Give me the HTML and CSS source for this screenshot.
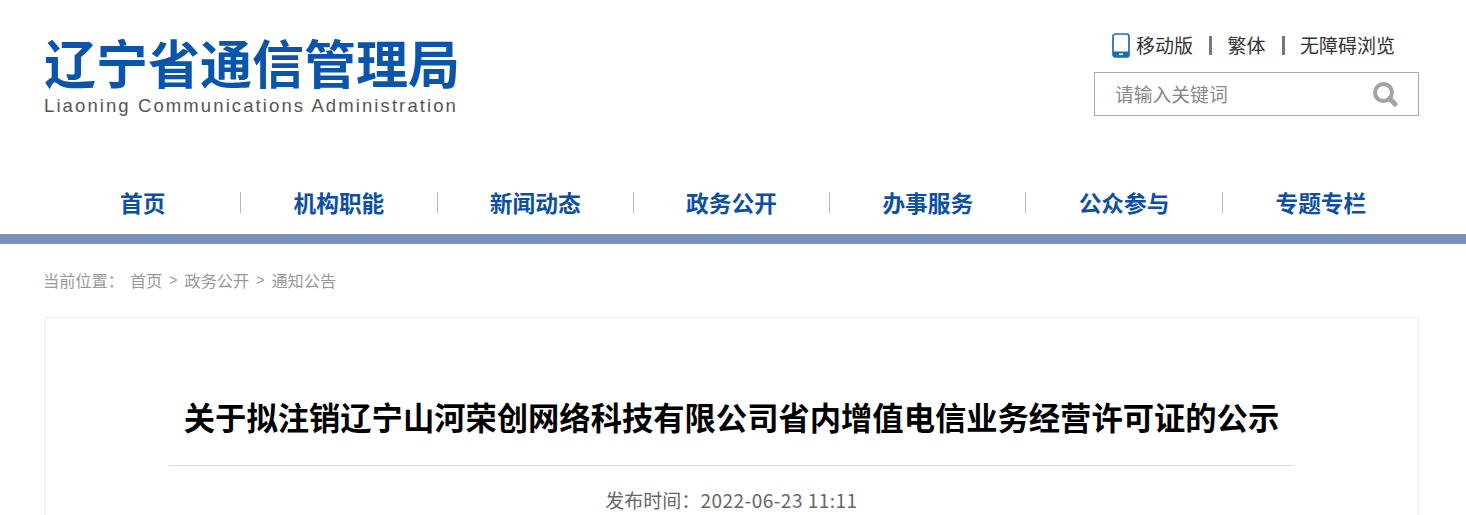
FILE: index.html
```html
<!DOCTYPE html>
<html lang="zh-CN">
<head>
<meta charset="utf-8">
<title>辽宁省通信管理局</title>
<link rel="stylesheet" href="styles.css">
</head>
<body>
<div class="page">
  <header class="header">
    <div class="logo">
      <div class="logo-cn">辽宁省通信管理局</div>
      <div class="logo-en">Liaoning Communications Administration</div>
    </div>
    <div class="tools">
      <div class="links">
        <a class="link link-mobile">
          <svg class="phone" width="18" height="25" viewBox="0 0 18 25"><rect x="1" y="1" width="16" height="23" rx="2.5" fill="#fff" stroke="#1a6bb8" stroke-width="1.7"/><rect x="1" y="18.5" width="16" height="5.5" fill="#1a6bb8"/><rect x="7" y="20.5" width="4" height="1.5" fill="#fff"/></svg>
          移动版</a>
        <span class="sep"></span>
        <a class="link">繁体</a>
        <span class="sep"></span>
        <a class="link">无障碍浏览</a>
      </div>
      <div class="search">
        <span class="placeholder">请输入关键词</span>
        <svg class="search-icon" width="26" height="26" viewBox="0 0 26 26"><circle cx="11.5" cy="11.5" r="8.5" fill="none" stroke="#a3a3a3" stroke-width="4"/><path d="M17.5 17.5L23 23" stroke="#a3a3a3" stroke-width="5" stroke-linecap="round"/></svg>
      </div>
    </div>
  </header>
  <nav class="nav">
    <a class="nav-item">首页</a>
    <a class="nav-item">机构职能</a>
    <a class="nav-item">新闻动态</a>
    <a class="nav-item">政务公开</a>
    <a class="nav-item">办事服务</a>
    <a class="nav-item">公众参与</a>
    <a class="nav-item">专题专栏</a>
  </nav>
  <div class="band"></div>
  <div class="crumbs">
    <span class="crumb-label">当前位置：</span>
    <a>首页</a><span class="gt">&gt;</span><a>政务公开</a><span class="gt">&gt;</span><a>通知公告</a>
  </div>
  <main class="card">
    <h1 class="title">关于拟注销辽宁山河荣创网络科技有限公司省内增值电信业务经营许可证的公示</h1>
    <div class="meta">发布时间：<span class="meta-date">2022-06-23 11:11</span></div>
  </main>
</div>
</body>
</html>
```
FILE: styles.css
```css
* { box-sizing: border-box; }
html, body { margin: 0; padding: 0; background: #fff; }
body { font-family: "Microsoft YaHei", "Noto Sans CJK SC", "Liberation Sans", sans-serif; }
.page { height: 515px; overflow: hidden; }
.header { display: flex; justify-content: space-between; align-items: flex-start; padding: 0 47px 0 44px; height: 184px; }
.logo { padding-top: 34px; width: 420px; }
.logo-cn { font-size: 52px; line-height: 56px; font-weight: 700; color: #0a55a9; white-space: nowrap; }
.logo-en { font-family: "Liberation Sans", sans-serif; font-size: 18.5px; line-height: 20px; letter-spacing: 2.1px; color: #555; white-space: nowrap; margin-top: 6px; }
.tools { width: 325px; padding-top: 31px; }
.links { display: flex; align-items: center; height: 28px; padding-left: 18px; font-size: 19px; color: #333; }
.link { display: flex; align-items: center; line-height: 28px; white-space: nowrap; }
.phone { margin-right: 6px; }
.sep { width: 3px; height: 19px; background: #777; margin: 0 15.5px 0 16px; }
.search { display: flex; justify-content: space-between; align-items: center; height: 44px; margin-top: 13px; border: 1px solid #aaa; padding: 0 20px 0 20px; }
.placeholder { font-size: 18.8px; line-height: 40px; color: #888; margin-top: 0; }
.nav { display: grid; grid-template-columns: repeat(7, 1fr); margin: 0 47px 0 45px; height: 50px; align-items: start; }
.nav-item { font-size: 22.7px; font-weight: 700; color: #0d50a1; text-align: center; border-right: 1px solid #bbb; height: 21px; margin-top: 8px; display: flex; align-items: center; justify-content: center; line-height: 21px; padding-bottom: 1px; }
.nav-item:last-child { border-right: 0; }
.band { height: 10px; background: #7792bc; }
.crumbs { display: flex; align-items: center; height: 22px; margin: 25px 0 0 43px; font-size: 16.2px; color: #999; }
.crumb-label { margin-right: 6px; }
.gt { font-family: "Liberation Sans", sans-serif; font-size: 14px; margin: 0 7px; }
.card { margin: 26px 47px 0 44px; border: 1px solid #eee; border-bottom: 0; padding: 0 124px; height: 300px; }
.title { margin: 75px 0 0; padding-bottom: 25px; height: 73px; font-size: 31.3px; line-height: 47px; font-weight: 700; color: #000; text-align: center; white-space: nowrap; border-bottom: 1px solid #ddd; }
.meta { margin-top: 20px; font-size: 19px; line-height: 28px; color: #666; text-align: center; }
.meta-date { letter-spacing: 0.5px; }
```
